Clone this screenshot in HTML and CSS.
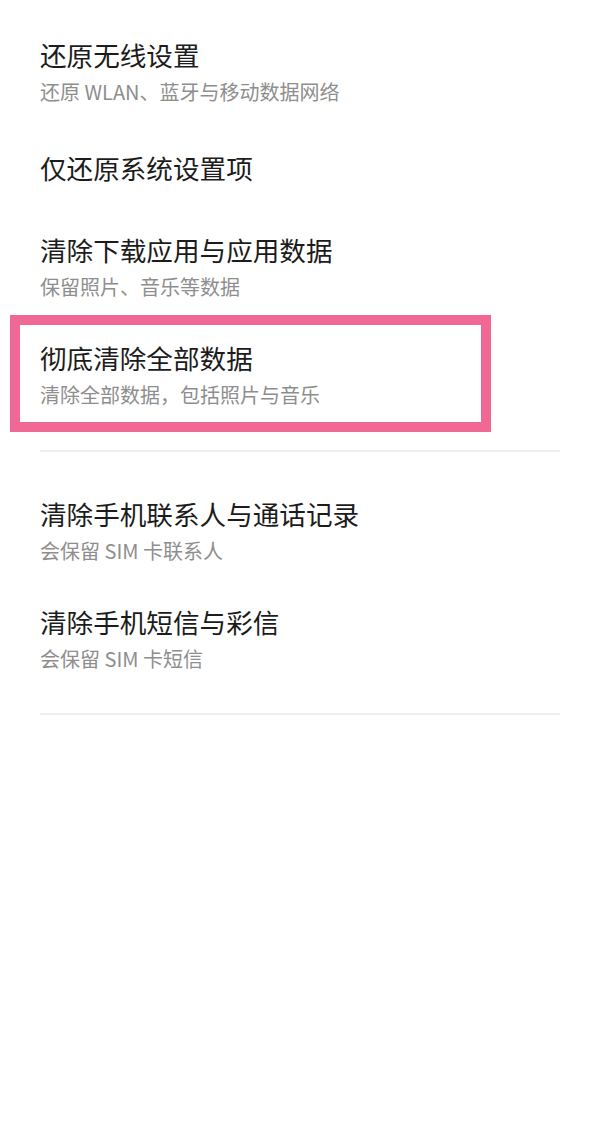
FILE: index.html
```html
<!DOCTYPE html>
<html lang="zh-CN">
<head>
    <meta charset="UTF-8">
    <meta name="viewport" content="width=device-width, initial-scale=1.0">
    <title>重置</title>
    <link rel="stylesheet" href="styles.css">
</head>
<body>
    <div class="page">
        <div class="group">
            <div class="item">
                <div class="title">还原无线设置</div>
                <div class="summary">还原 WLAN、蓝牙与移动数据网络</div>
            </div>
            <div class="item single">
                <div class="title">仅还原系统设置项</div>
            </div>
            <div class="item">
                <div class="title">清除下载应用与应用数据</div>
                <div class="summary">保留照片、音乐等数据</div>
            </div>
            <div class="item highlight">
                <div class="title">彻底清除全部数据</div>
                <div class="summary">清除全部数据，包括照片与音乐</div>
            </div>
        </div>
        <div class="divider"></div>
        <div class="group second">
            <div class="item">
                <div class="title">清除手机联系人与通话记录</div>
                <div class="summary">会保留 SIM 卡联系人</div>
            </div>
            <div class="item">
                <div class="title">清除手机短信与彩信</div>
                <div class="summary">会保留 SIM 卡短信</div>
            </div>
        </div>
        <div class="divider"></div>
    </div>
</body>
</html>
```

FILE: styles.css
```css
:root {
    --text-primary: #1c1c1c;
    --text-secondary: #8e8e8e;
    --divider: #eeeeee;
    --mark: #f26895;
}

body {
    margin: 0;
    background: #ffffff;
    font-family: "Noto Sans CJK SC", "Noto Sans", sans-serif;
    color: var(--text-primary);
}

.page {
    padding: 18px 40px 0;
}

.group {
    padding-bottom: 21px;
}

.group.second {
    padding-top: 25px;
    padding-bottom: 20px;
}

.item {
    position: relative;
    padding: 19px 0;
}

.item.single {
    padding: 24px 0 27px;
}

.title {
    font-size: 26.6px;
    line-height: 36px;
}

.summary {
    margin-top: 4px;
    font-size: 20px;
    line-height: 30px;
    color: var(--text-secondary);
}

.highlight::after {
    content: "";
    position: absolute;
    top: -6px;
    bottom: -3px;
    left: -30px;
    width: 461px;
    border: 10px solid var(--mark);
}

.divider {
    height: 2px;
    background: var(--divider);
}
```
